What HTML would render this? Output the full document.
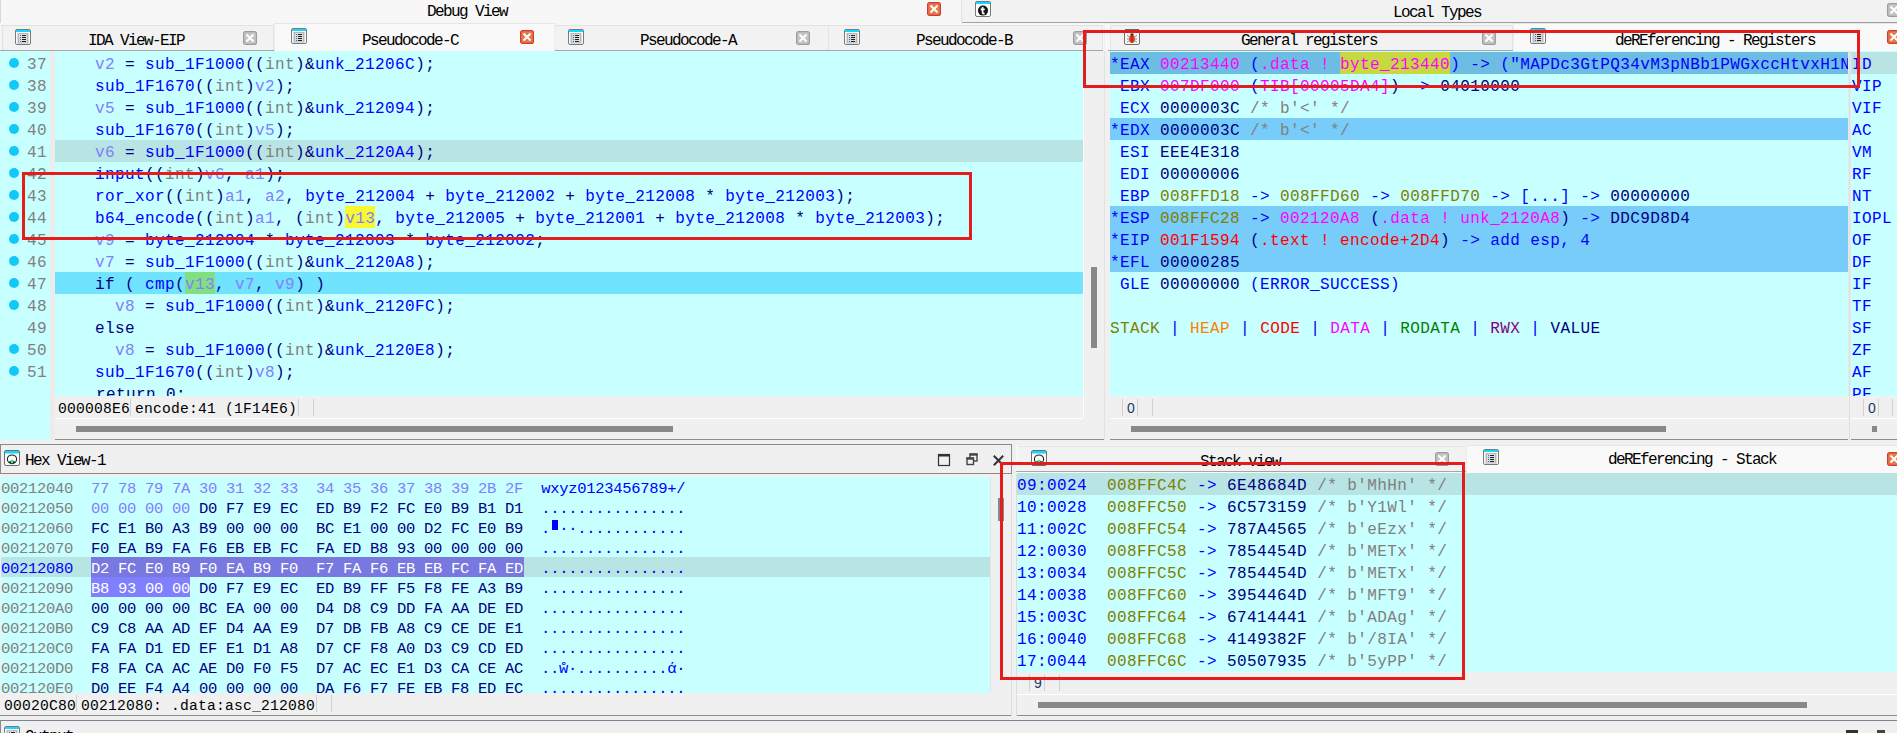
<!DOCTYPE html><html><head><meta charset="utf-8"><style>
*{margin:0;padding:0}
html,body{width:1897px;height:733px;overflow:hidden;background:#f0f0f0}
body>div,body>svg,div>div,div>svg{position:absolute}
.t{white-space:pre;line-height:22px;height:22px}
.cd{font-family:"Liberation Mono",monospace;font-size:16px;letter-spacing:0.4px;padding-top:2px}
.hx{font-family:"Liberation Mono",monospace;font-size:15.5px;letter-spacing:-0.3px;line-height:20px;height:20px;padding-top:2px}
.tabf{font-family:"Liberation Mono",monospace;font-size:16px;letter-spacing:-1.6px;color:#000;line-height:20px;height:20px}
.stf{font-family:"Liberation Mono",monospace;font-size:14.67px;letter-spacing:0.2px;color:#000;line-height:18px;height:18px}
.stn{font-family:"Liberation Sans",sans-serif;font-size:14px;color:#1a3a6a;line-height:18px;height:18px}
span{position:static}
.n{color:#000080}.b{color:#0000ff}.v{color:#8080ff}.k{color:#808080}.gray{color:#808080}
.m{color:#ff00ff}.o{color:#808000}.r{color:#ff0000}.g{color:#808080}.or{color:#ff8000}.gr{color:#008000}.pu{color:#800080}
.w{color:#ffffff}
.blk{display:inline-block;width:6px;height:10px;background:#0000ff;color:transparent;vertical-align:-1px;margin:0 1.5px 0 1.5px;letter-spacing:0}

</style></head><body><div style="left:0;top:0;width:1897px;height:733px;background:#f0f0f0"></div>
<div style="left:0px;top:0px;width:962px;height:24px;background:#f7f7f7"></div>
<div style="left:0px;top:0px;width:1px;height:440px;background:#d8d8d8"></div>
<div style="left:962px;top:0px;width:935px;height:22px;background:#f2f2f2"></div>
<div style="left:961px;top:0px;width:1px;height:22px;background:#e0e0e0"></div>
<div style="left:962px;top:22px;width:935px;height:1px;background:#a0a0a0"></div>
<div class="t tabf" style="left:427px;top:2px;">Debug View</div>
<svg style="left:927px;top:2px" width="14" height="14" viewBox="0 0 14 14"><rect x="0.6" y="0.6" width="12.8" height="12.8" rx="2" fill="#e27a4e" stroke="#d83a2a" stroke-width="1.2"/><path d="M4.2 4.2 L9.8 9.8 M9.8 4.2 L4.2 9.8" stroke="#fff" stroke-width="2" stroke-linecap="square"/></svg>
<svg style="left:975px;top:1px" width="16" height="16" viewBox="0 0 16 16"><rect x="0.5" y="0.5" width="15" height="15" rx="1.5" fill="#fdfdfd" stroke="#7a7a7a"/><rect x="1" y="1" width="14" height="2" fill="#10d8ff"/><circle cx="8" cy="9.6" r="5" fill="#111"/><path d="M7.6 6 L7.6 11.6 Q7.7 12.9 9.6 12.4 M5.6 8.4 L9.8 8.4" stroke="#fff" stroke-width="1.7" fill="none"/></svg>
<div class="t tabf" style="left:1393px;top:3px;">Local Types</div>
<svg style="left:1887px;top:3px" width="14" height="14" viewBox="0 0 14 14"><rect x="0.6" y="0.6" width="12.8" height="12.8" rx="2" fill="#c4c4c4" stroke="#9c9c9c" stroke-width="1.2"/><path d="M4.2 4.2 L9.8 9.8 M9.8 4.2 L4.2 9.8" stroke="#fff" stroke-width="2" stroke-linecap="square"/></svg>
<div style="left:0px;top:23px;width:1104px;height:28px;background:#f7f7f7"></div>
<div style="left:1px;top:25px;width:273px;height:25px;background:#f2f2f2;border-top:1px solid #e2e2e2;box-sizing:border-box"></div>
<div style="left:273px;top:25px;width:1px;height:25px;background:#e4e4e4"></div>
<div style="left:555px;top:25px;width:274px;height:25px;background:#f2f2f2;border-top:1px solid #e2e2e2;box-sizing:border-box"></div>
<div style="left:828px;top:25px;width:1px;height:25px;background:#e4e4e4"></div>
<div style="left:829px;top:25px;width:274px;height:25px;background:#f2f2f2;border-top:1px solid #e2e2e2;box-sizing:border-box"></div>
<div style="left:1102px;top:25px;width:1px;height:25px;background:#e4e4e4"></div>
<div style="left:0px;top:50px;width:274px;height:1px;background:#a6a6a6"></div>
<div style="left:2px;top:25px;width:1px;height:25px;background:#e0e0e0"></div>
<div style="left:555px;top:50px;width:548px;height:1px;background:#a6a6a6"></div>
<div style="left:274px;top:23px;width:281px;height:28px;background:#f9f9f9;border-top:1px solid #e6e6e6;border-left:1px solid #ececec;border-right:1px solid #ececec;box-sizing:border-box"></div>
<svg style="left:15px;top:29px" width="16" height="16" viewBox="0 0 16 16"><rect x="0.5" y="0.5" width="15" height="15" rx="1.5" fill="#fdfdfd" stroke="#7a7a7a"/><rect x="1" y="1" width="14" height="2" fill="#10d8ff"/><rect x="2.5" y="4" width="11" height="10.5" fill="#b8b8b8"/><rect x="4" y="5" width="8" height="8.5" fill="#dcdcdc"/><rect x="5" y="6" width="1" height="1" fill="#1a7ad8"/><rect x="7" y="6" width="4" height="1" fill="#222"/><rect x="5" y="8" width="1" height="1" fill="#1a7ad8"/><rect x="7" y="8" width="4" height="1" fill="#222"/><rect x="5" y="10" width="1" height="1" fill="#1a7ad8"/><rect x="7" y="10" width="4" height="1" fill="#222"/><rect x="5" y="12" width="1" height="1" fill="#1a7ad8"/><rect x="7" y="12" width="4" height="1" fill="#222"/></svg>
<div class="t tabf" style="left:88px;top:31px;">IDA View-EIP</div>
<svg style="left:243px;top:31px" width="14" height="14" viewBox="0 0 14 14"><rect x="0.6" y="0.6" width="12.8" height="12.8" rx="2" fill="#c4c4c4" stroke="#9c9c9c" stroke-width="1.2"/><path d="M4.2 4.2 L9.8 9.8 M9.8 4.2 L4.2 9.8" stroke="#fff" stroke-width="2" stroke-linecap="square"/></svg>
<svg style="left:291px;top:28px" width="16" height="16" viewBox="0 0 16 16"><rect x="0.5" y="0.5" width="15" height="15" rx="1.5" fill="#fdfdfd" stroke="#7a7a7a"/><rect x="1" y="1" width="14" height="2" fill="#10d8ff"/><rect x="2.5" y="4" width="11" height="10.5" fill="#b8b8b8"/><rect x="4" y="5" width="8" height="8.5" fill="#dcdcdc"/><rect x="5" y="6" width="1" height="1" fill="#1a7ad8"/><rect x="7" y="6" width="4" height="1" fill="#222"/><rect x="5" y="8" width="1" height="1" fill="#1a7ad8"/><rect x="7" y="8" width="4" height="1" fill="#222"/><rect x="5" y="10" width="1" height="1" fill="#1a7ad8"/><rect x="7" y="10" width="4" height="1" fill="#222"/><rect x="5" y="12" width="1" height="1" fill="#1a7ad8"/><rect x="7" y="12" width="4" height="1" fill="#222"/></svg>
<div class="t tabf" style="left:362px;top:31px;">Pseudocode-C</div>
<svg style="left:520px;top:30px" width="14" height="14" viewBox="0 0 14 14"><rect x="0.6" y="0.6" width="12.8" height="12.8" rx="2" fill="#e27a4e" stroke="#d83a2a" stroke-width="1.2"/><path d="M4.2 4.2 L9.8 9.8 M9.8 4.2 L4.2 9.8" stroke="#fff" stroke-width="2" stroke-linecap="square"/></svg>
<svg style="left:568px;top:29px" width="16" height="16" viewBox="0 0 16 16"><rect x="0.5" y="0.5" width="15" height="15" rx="1.5" fill="#fdfdfd" stroke="#7a7a7a"/><rect x="1" y="1" width="14" height="2" fill="#10d8ff"/><rect x="2.5" y="4" width="11" height="10.5" fill="#b8b8b8"/><rect x="4" y="5" width="8" height="8.5" fill="#dcdcdc"/><rect x="5" y="6" width="1" height="1" fill="#1a7ad8"/><rect x="7" y="6" width="4" height="1" fill="#222"/><rect x="5" y="8" width="1" height="1" fill="#1a7ad8"/><rect x="7" y="8" width="4" height="1" fill="#222"/><rect x="5" y="10" width="1" height="1" fill="#1a7ad8"/><rect x="7" y="10" width="4" height="1" fill="#222"/><rect x="5" y="12" width="1" height="1" fill="#1a7ad8"/><rect x="7" y="12" width="4" height="1" fill="#222"/></svg>
<div class="t tabf" style="left:640px;top:31px;">Pseudocode-A</div>
<svg style="left:796px;top:31px" width="14" height="14" viewBox="0 0 14 14"><rect x="0.6" y="0.6" width="12.8" height="12.8" rx="2" fill="#c4c4c4" stroke="#9c9c9c" stroke-width="1.2"/><path d="M4.2 4.2 L9.8 9.8 M9.8 4.2 L4.2 9.8" stroke="#fff" stroke-width="2" stroke-linecap="square"/></svg>
<svg style="left:844px;top:29px" width="16" height="16" viewBox="0 0 16 16"><rect x="0.5" y="0.5" width="15" height="15" rx="1.5" fill="#fdfdfd" stroke="#7a7a7a"/><rect x="1" y="1" width="14" height="2" fill="#10d8ff"/><rect x="2.5" y="4" width="11" height="10.5" fill="#b8b8b8"/><rect x="4" y="5" width="8" height="8.5" fill="#dcdcdc"/><rect x="5" y="6" width="1" height="1" fill="#1a7ad8"/><rect x="7" y="6" width="4" height="1" fill="#222"/><rect x="5" y="8" width="1" height="1" fill="#1a7ad8"/><rect x="7" y="8" width="4" height="1" fill="#222"/><rect x="5" y="10" width="1" height="1" fill="#1a7ad8"/><rect x="7" y="10" width="4" height="1" fill="#222"/><rect x="5" y="12" width="1" height="1" fill="#1a7ad8"/><rect x="7" y="12" width="4" height="1" fill="#222"/></svg>
<div class="t tabf" style="left:916px;top:31px;">Pseudocode-B</div>
<svg style="left:1073px;top:31px" width="14" height="14" viewBox="0 0 14 14"><rect x="0.6" y="0.6" width="12.8" height="12.8" rx="2" fill="#c4c4c4" stroke="#9c9c9c" stroke-width="1.2"/><path d="M4.2 4.2 L9.8 9.8 M9.8 4.2 L4.2 9.8" stroke="#fff" stroke-width="2" stroke-linecap="square"/></svg>
<div style="left:0px;top:51px;width:50px;height:389px;background:#c8ffff"></div>
<div style="left:50px;top:51px;width:5px;height:389px;background:#ececec"></div>
<div style="left:55px;top:51px;width:1028px;height:345px;background:#c8ffff"></div>
<div style="left:1083px;top:51px;width:1px;height:367px;background:#ffffff"></div>
<div style="left:55px;top:140px;width:1028px;height:22px;background:#b8e4e4"></div>
<div style="left:55px;top:272px;width:1028px;height:22px;background:#70e4ff"></div>
<div style="left:345px;top:206px;width:30px;height:22px;background:#f8f830"></div>
<div style="left:185px;top:272px;width:30px;height:22px;background:#80e080"></div>
<div style="left:9px;top:58px;width:10px;height:10px;border-radius:50%;background:#12c8f8"></div>
<div class="t cd gray" style="left:27px;top:52px;">37</div>
<div class="t cd n" style="left:55px;top:52px;">    <span class="v">v2</span> = <span class="b">sub_1F1000</span>((<span class="k">int</span>)&amp;<span class="b">unk_21206C</span>);</div>
<div style="left:9px;top:80px;width:10px;height:10px;border-radius:50%;background:#12c8f8"></div>
<div class="t cd gray" style="left:27px;top:74px;">38</div>
<div class="t cd n" style="left:55px;top:74px;">    <span class="b">sub_1F1670</span>((<span class="k">int</span>)<span class="v">v2</span>);</div>
<div style="left:9px;top:102px;width:10px;height:10px;border-radius:50%;background:#12c8f8"></div>
<div class="t cd gray" style="left:27px;top:96px;">39</div>
<div class="t cd n" style="left:55px;top:96px;">    <span class="v">v5</span> = <span class="b">sub_1F1000</span>((<span class="k">int</span>)&amp;<span class="b">unk_212094</span>);</div>
<div style="left:9px;top:124px;width:10px;height:10px;border-radius:50%;background:#12c8f8"></div>
<div class="t cd gray" style="left:27px;top:118px;">40</div>
<div class="t cd n" style="left:55px;top:118px;">    <span class="b">sub_1F1670</span>((<span class="k">int</span>)<span class="v">v5</span>);</div>
<div style="left:9px;top:146px;width:10px;height:10px;border-radius:50%;background:#12c8f8"></div>
<div class="t cd gray" style="left:27px;top:140px;">41</div>
<div class="t cd n" style="left:55px;top:140px;">    <span class="v">v6</span> = <span class="b">sub_1F1000</span>((<span class="k">int</span>)&amp;<span class="b">unk_2120A4</span>);</div>
<div style="left:9px;top:168px;width:10px;height:10px;border-radius:50%;background:#12c8f8"></div>
<div class="t cd gray" style="left:27px;top:162px;">42</div>
<div class="t cd n" style="left:55px;top:162px;">    <span class="b">input</span>((<span class="k">int</span>)<span class="v">v6</span>, <span class="v">a1</span>);</div>
<div style="left:9px;top:190px;width:10px;height:10px;border-radius:50%;background:#12c8f8"></div>
<div class="t cd gray" style="left:27px;top:184px;">43</div>
<div class="t cd n" style="left:55px;top:184px;">    <span class="b">ror_xor</span>((<span class="k">int</span>)<span class="v">a1</span>, <span class="v">a2</span>, <span class="b">byte_212004</span> + <span class="b">byte_212002</span> + <span class="b">byte_212008</span> * <span class="b">byte_212003</span>);</div>
<div style="left:9px;top:212px;width:10px;height:10px;border-radius:50%;background:#12c8f8"></div>
<div class="t cd gray" style="left:27px;top:206px;">44</div>
<div class="t cd n" style="left:55px;top:206px;">    <span class="b">b64_encode</span>((<span class="k">int</span>)<span class="v">a1</span>, (<span class="k">int</span>)<span class="v hy">v13</span>, <span class="b">byte_212005</span> + <span class="b">byte_212001</span> + <span class="b">byte_212008</span> * <span class="b">byte_212003</span>);</div>
<div style="left:9px;top:234px;width:10px;height:10px;border-radius:50%;background:#12c8f8"></div>
<div class="t cd gray" style="left:27px;top:228px;">45</div>
<div class="t cd n" style="left:55px;top:228px;">    <span class="v">v9</span> = <span class="b">byte_212004</span> * <span class="b">byte_212003</span> * <span class="b">byte_212002</span>;</div>
<div style="left:9px;top:256px;width:10px;height:10px;border-radius:50%;background:#12c8f8"></div>
<div class="t cd gray" style="left:27px;top:250px;">46</div>
<div class="t cd n" style="left:55px;top:250px;">    <span class="v">v7</span> = <span class="b">sub_1F1000</span>((<span class="k">int</span>)&amp;<span class="b">unk_2120A8</span>);</div>
<div style="left:9px;top:278px;width:10px;height:10px;border-radius:50%;background:#12c8f8"></div>
<div class="t cd gray" style="left:27px;top:272px;">47</div>
<div class="t cd n" style="left:55px;top:272px;">    if ( <span class="b">cmp</span>(<span class="v hg">v13</span>, <span class="v">v7</span>, <span class="v">v9</span>) )</div>
<div style="left:9px;top:300px;width:10px;height:10px;border-radius:50%;background:#12c8f8"></div>
<div class="t cd gray" style="left:27px;top:294px;">48</div>
<div class="t cd n" style="left:55px;top:294px;">      <span class="v">v8</span> = <span class="b">sub_1F1000</span>((<span class="k">int</span>)&amp;<span class="b">unk_2120FC</span>);</div>
<div class="t cd gray" style="left:27px;top:316px;">49</div>
<div class="t cd n" style="left:55px;top:316px;">    else</div>
<div style="left:9px;top:344px;width:10px;height:10px;border-radius:50%;background:#12c8f8"></div>
<div class="t cd gray" style="left:27px;top:338px;">50</div>
<div class="t cd n" style="left:55px;top:338px;">      <span class="v">v8</span> = <span class="b">sub_1F1000</span>((<span class="k">int</span>)&amp;<span class="b">unk_2120E8</span>);</div>
<div style="left:9px;top:366px;width:10px;height:10px;border-radius:50%;background:#12c8f8"></div>
<div class="t cd gray" style="left:27px;top:360px;">51</div>
<div class="t cd n" style="left:55px;top:360px;">    <span class="b">sub_1F1670</span>((<span class="k">int</span>)<span class="v">v8</span>);</div>
<div style="left:55px;top:382px;width:1028px;height:14px;overflow:hidden"><div class="t cd n" style="left:1px;top:0px">    return 0;</div></div>
<div style="left:1091px;top:267px;width:6px;height:81px;background:#888888"></div>
<div style="left:1104px;top:51px;width:1px;height:389px;background:#e2e2e2"></div>
<div style="left:55px;top:418px;width:1028px;height:1px;background:#ffffff"></div>
<div class="t stf" style="left:58px;top:400px;">000008E6</div>
<div style="left:130px;top:399px;width:1px;height:17px;background:#d0d0d0"></div>
<div class="t stf" style="left:135px;top:400px;">encode:41 (1F14E6)</div>
<div style="left:298px;top:399px;width:1px;height:17px;background:#d0d0d0"></div>
<div style="left:313px;top:399px;width:1px;height:17px;background:#d0d0d0"></div>
<div style="left:76px;top:426px;width:597px;height:6px;background:#888888"></div>
<div style="left:55px;top:439px;width:1049px;height:1px;background:#8c8c8c"></div>
<div style="left:1105px;top:24px;width:792px;height:27px;background:#f7f7f7"></div>
<div style="left:1111px;top:25px;width:402px;height:25px;background:#f2f2f2;border-top:1px solid #e2e2e2;box-sizing:border-box"></div>
<div style="left:1110px;top:25px;width:1px;height:25px;background:#e4e4e4"></div>
<div style="left:1512px;top:25px;width:1px;height:25px;background:#e4e4e4"></div>
<div style="left:1108px;top:50px;width:405px;height:1px;background:#a6a6a6"></div>
<div style="left:1513px;top:23px;width:384px;height:28px;background:#f9f9f9;border-top:1px solid #e6e6e6;border-left:1px solid #ececec;box-sizing:border-box"></div>
<svg style="left:1124px;top:29px" width="16" height="16" viewBox="0 0 16 16"><rect x="0.5" y="0.5" width="15" height="15" rx="1.5" fill="#f6f6f6" stroke="#707070"/><rect x="1" y="0.5" width="14" height="2" fill="#556068"/><path d="M3 6.5 L6 8 M3 10 L6 10 M3 13 L6 11.5 M13 6.5 L10 8 M13 10 L10 10 M13 13 L10 11.5" stroke="#8a9aa0" stroke-width="1"/><ellipse cx="8" cy="10" rx="2.8" ry="4" fill="#e83a10"/><rect x="7.5" y="6.5" width="1" height="7" fill="#9a2a10"/><rect x="6.5" y="4.5" width="3" height="2" fill="#402018"/></svg>
<div class="t tabf" style="left:1241px;top:31px;">General registers</div>
<svg style="left:1482px;top:31px" width="14" height="14" viewBox="0 0 14 14"><rect x="0.6" y="0.6" width="12.8" height="12.8" rx="2" fill="#c4c4c4" stroke="#9c9c9c" stroke-width="1.2"/><path d="M4.2 4.2 L9.8 9.8 M9.8 4.2 L4.2 9.8" stroke="#fff" stroke-width="2" stroke-linecap="square"/></svg>
<svg style="left:1530px;top:28px" width="16" height="16" viewBox="0 0 16 16"><rect x="0.5" y="0.5" width="15" height="15" rx="1.5" fill="#fdfdfd" stroke="#7a7a7a"/><rect x="1" y="1" width="14" height="2" fill="#10d8ff"/><rect x="2.5" y="4" width="11" height="10.5" fill="#b8b8b8"/><rect x="4" y="5" width="8" height="8.5" fill="#dcdcdc"/><rect x="5" y="6" width="1" height="1" fill="#1a7ad8"/><rect x="7" y="6" width="4" height="1" fill="#222"/><rect x="5" y="8" width="1" height="1" fill="#1a7ad8"/><rect x="7" y="8" width="4" height="1" fill="#222"/><rect x="5" y="10" width="1" height="1" fill="#1a7ad8"/><rect x="7" y="10" width="4" height="1" fill="#222"/><rect x="5" y="12" width="1" height="1" fill="#1a7ad8"/><rect x="7" y="12" width="4" height="1" fill="#222"/></svg>
<div class="t tabf" style="left:1615px;top:31px;">deREferencing - Registers</div>
<svg style="left:1887px;top:30px" width="14" height="14" viewBox="0 0 14 14"><rect x="0.6" y="0.6" width="12.8" height="12.8" rx="2" fill="#e27a4e" stroke="#d83a2a" stroke-width="1.2"/><path d="M4.2 4.2 L9.8 9.8 M9.8 4.2 L4.2 9.8" stroke="#fff" stroke-width="2" stroke-linecap="square"/></svg>
<div style="left:1110px;top:51px;width:738px;height:345px;background:#c8ffff"></div>
<div style="left:1848px;top:51px;width:3px;height:345px;background:#e8e8e8"></div>
<div style="left:1851px;top:51px;width:46px;height:345px;background:#c8ffff"></div>
<div style="left:1110px;top:52px;width:738px;height:22px;background:#6cbce4"></div>
<div style="left:1851px;top:52px;width:46px;height:22px;background:#b8e4e4"></div>
<div style="left:1340px;top:52px;width:110px;height:22px;background:#c8d840"></div>
<div style="left:1110px;top:118px;width:738px;height:22px;background:#78ccfa"></div>
<div style="left:1110px;top:206px;width:738px;height:22px;background:#78ccfa"></div>
<div style="left:1110px;top:228px;width:738px;height:22px;background:#78ccfa"></div>
<div style="left:1110px;top:250px;width:738px;height:22px;background:#78ccfa"></div>
<div style="left:1110px;top:52px;width:738px;height:344px;overflow:hidden">
<div class="t cd" style="left:0px;top:0px;"><span class="b">*EAX</span> <span class="m">00213440</span> <span class="b">(</span><span class="m">.data ! </span><span class="m hb">byte_213440</span><span class="b">) -&gt; ("MAPDc3GtPQ34vM3pNBb1PWGxccHtvxH1N</span></div>
<div class="t cd" style="left:0px;top:22px;"><span class="b"> EBX</span> <span class="m">007DF000</span> <span class="b">(</span><span class="m">TIB[00005DA4]</span><span class="n">)</span> <span class="b">-&gt; </span><span class="n">04010000</span></div>
<div class="t cd" style="left:0px;top:44px;"><span class="b"> ECX</span> <span class="n">0000003C</span> <span class="g">/* b'&lt;' */</span></div>
<div class="t cd" style="left:0px;top:66px;"><span class="b">*EDX</span> <span class="n">0000003C</span> <span class="g">/* b'&lt;' */</span></div>
<div class="t cd" style="left:0px;top:88px;"><span class="b"> ESI</span> <span class="n">EEE4E318</span></div>
<div class="t cd" style="left:0px;top:110px;"><span class="b"> EDI</span> <span class="n">00000006</span></div>
<div class="t cd" style="left:0px;top:132px;"><span class="b"> EBP</span> <span class="o">008FFD18</span> <span class="b">-&gt;</span> <span class="o">008FFD60</span> <span class="b">-&gt;</span> <span class="o">008FFD70</span> <span class="b">-&gt; [...] -&gt;</span> <span class="n">00000000</span></div>
<div class="t cd" style="left:0px;top:154px;"><span class="b">*ESP</span> <span class="o">008FFC28</span> <span class="b">-&gt;</span> <span class="m">002120A8</span> <span class="n">(</span><span class="m">.data ! unk_2120A8</span><span class="n">)</span> <span class="b">-&gt;</span> <span class="n">DDC9D8D4</span></div>
<div class="t cd" style="left:0px;top:176px;"><span class="b">*EIP</span> <span class="r">001F1594</span> <span class="n">(</span><span class="r">.text ! encode+2D4</span><span class="n">)</span> <span class="b">-&gt; add esp, 4</span></div>
<div class="t cd" style="left:0px;top:198px;"><span class="b">*EFL</span> <span class="n">00000285</span></div>
<div class="t cd" style="left:0px;top:220px;"><span class="b"> GLE</span> <span class="n">00000000</span> <span class="b">(ERROR_SUCCESS)</span></div>
<div class="t cd" style="left:0px;top:264px;"><span class="o">STACK</span> <span class="b">|</span> <span class="or">HEAP</span> <span class="b">|</span> <span class="r">CODE</span> <span class="b">|</span> <span class="m">DATA</span> <span class="b">|</span> <span class="gr">RODATA</span> <span class="b">|</span> <span class="pu">RWX</span> <span class="b">|</span> <span class="n">VALUE</span></div>
</div>
<div style="left:1851px;top:52px;width:46px;height:344px;overflow:hidden">
<div class="t cd b" style="left:1px;top:0px;">ID</div>
<div class="t cd b" style="left:1px;top:22px;">VIP</div>
<div class="t cd b" style="left:1px;top:44px;">VIF</div>
<div class="t cd b" style="left:1px;top:66px;">AC</div>
<div class="t cd b" style="left:1px;top:88px;">VM</div>
<div class="t cd b" style="left:1px;top:110px;">RF</div>
<div class="t cd b" style="left:1px;top:132px;">NT</div>
<div class="t cd b" style="left:1px;top:154px;">IOPL</div>
<div class="t cd b" style="left:1px;top:176px;">OF</div>
<div class="t cd b" style="left:1px;top:198px;">DF</div>
<div class="t cd b" style="left:1px;top:220px;">IF</div>
<div class="t cd b" style="left:1px;top:242px;">TF</div>
<div class="t cd b" style="left:1px;top:264px;">SF</div>
<div class="t cd b" style="left:1px;top:286px;">ZF</div>
<div class="t cd b" style="left:1px;top:308px;">AF</div>
<div class="t cd b" style="left:1px;top:330px;">PF</div>
</div>
<div style="left:1110px;top:418px;width:738px;height:1px;background:#ffffff"></div>
<div style="left:1851px;top:418px;width:46px;height:1px;background:#ffffff"></div>
<div style="left:1122px;top:399px;width:1px;height:17px;background:#d0d0d0"></div>
<div style="left:1137px;top:399px;width:1px;height:17px;background:#d0d0d0"></div>
<div style="left:1152px;top:399px;width:1px;height:17px;background:#d0d0d0"></div>
<div style="left:1863px;top:399px;width:1px;height:17px;background:#d0d0d0"></div>
<div style="left:1878px;top:399px;width:1px;height:17px;background:#d0d0d0"></div>
<div style="left:1892px;top:399px;width:1px;height:17px;background:#d0d0d0"></div>
<div class="t stn" style="left:1127px;top:399px;">0</div>
<div class="t stn" style="left:1868px;top:399px;">0</div>
<div style="left:1131px;top:426px;width:535px;height:6px;background:#888888"></div>
<div style="left:1872px;top:426px;width:5px;height:6px;background:#888888"></div>
<div style="left:1110px;top:439px;width:738px;height:1px;background:#8c8c8c"></div>
<div style="left:1851px;top:439px;width:46px;height:1px;background:#8c8c8c"></div>
<div style="left:1849px;top:51px;width:1px;height:389px;background:#e0e0e0"></div>
<div style="left:0px;top:444px;width:1012px;height:30px;background:#f0f0f0;border:1px solid #8a8a8a;box-sizing:border-box"></div>
<svg style="left:4px;top:450px" width="16" height="16" viewBox="0 0 16 16"><rect x="0.5" y="0.5" width="15" height="15" rx="1.5" fill="#fafafa" stroke="#6e6e6e"/><rect x="1" y="1" width="14" height="2.5" fill="#10d8ff"/><ellipse cx="8" cy="9.3" rx="4.6" ry="4.3" fill="none" stroke="#1a1a1a" stroke-width="1.1"/><path d="M4.5 12 Q8 9 11.5 12 Q8 14.5 4.5 12 Z" fill="#1a1a1a"/><ellipse cx="8" cy="11.6" rx="1.4" ry="2" fill="#3ee87a"/></svg>
<div class="t tabf" style="left:25px;top:451px;">Hex View-1</div>
<svg style="left:937px;top:453px" width="14" height="14" viewBox="0 0 14 14"><rect x="1.5" y="1.5" width="11" height="11" fill="none" stroke="#333" stroke-width="1.2"/><rect x="1" y="1" width="12" height="2.5" fill="#333"/></svg>
<svg style="left:966px;top:453px" width="12" height="13" viewBox="0 0 12 13"><rect x="4" y="1" width="7" height="7" fill="#f0f0f0" stroke="#444" stroke-width="1.4"/><rect x="3.5" y="0.5" width="8" height="2.2" fill="#444"/><rect x="1" y="5" width="6.5" height="6.5" fill="#f0f0f0" stroke="#444" stroke-width="1.4"/><rect x="0.5" y="4.5" width="7.5" height="2.2" fill="#444"/></svg>
<svg style="left:992px;top:454px" width="13" height="13" viewBox="0 0 13 13"><path d="M1.8 1.8 L11.2 11.2 M11.2 1.8 L1.8 11.2" stroke="#333" stroke-width="2"/></svg>
<div style="left:1px;top:477px;width:989px;height:216px;background:#c8ffff"></div>
<div style="left:1px;top:557px;width:989px;height:20px;background:#b8e4e4"></div>
<div style="left:91px;top:557px;width:433px;height:20px;background:#7878e0"></div>
<div style="left:91px;top:577px;width:99px;height:20px;background:#8080ff"></div>
<div style="left:1px;top:477px;width:989px;height:216px;overflow:hidden">
<div class="t hx n" style="left:0px;top:0px;"><span class="gray">00212040</span>  <span class="v">77 78 79 7A 30 31 32 33  34 35 36 37 38 39 2B 2F</span>  <span class="b">wxyz0123456789+/</span></div>
<div class="t hx n" style="left:0px;top:20px;"><span class="gray">00212050</span>  <span class="v">00 00 00 00</span> D0 F7 E9 EC  ED B9 F2 FC E0 B9 B1 D1  <span class="b">................</span></div>
<div class="t hx n" style="left:0px;top:40px;"><span class="gray">00212060</span>  FC E1 B0 A3 B9 00 00 00  BC E1 00 00 D2 FC E0 B9  <span class="b">.</span><span class="blk">█</span><span class="b">··............</span></div>
<div class="t hx n" style="left:0px;top:60px;"><span class="gray">00212070</span>  F0 EA B9 FA F6 EB EB FC  FA ED B8 93 00 00 00 00  <span class="b">................</span></div>
<div class="t hx n" style="left:0px;top:80px;"><span class="b">00212080</span>  <span class="w">D2 FC E0 B9 F0 EA B9 F0  F7 FA F6 EB EB FC FA ED</span>  <span class="b">................</span></div>
<div class="t hx n" style="left:0px;top:100px;"><span class="gray">00212090</span>  <span class="w">B8 93 00 00</span> D0 F7 E9 EC  ED B9 FF F5 F8 FE A3 B9  <span class="b">................</span></div>
<div class="t hx n" style="left:0px;top:120px;"><span class="gray">002120A0</span>  00 00 00 00 BC EA 00 00  D4 D8 C9 DD FA AA DE ED  <span class="b">................</span></div>
<div class="t hx n" style="left:0px;top:140px;"><span class="gray">002120B0</span>  C9 C8 AA AD EF D4 AA E9  D7 DB FB A8 C9 CE DE E1  <span class="b">................</span></div>
<div class="t hx n" style="left:0px;top:160px;"><span class="gray">002120C0</span>  FA FA D1 ED EF E1 D1 A8  D7 CF F8 A0 D3 C9 CD ED  <span class="b">................</span></div>
<div class="t hx n" style="left:0px;top:180px;"><span class="gray">002120D0</span>  F8 FA CA AC AE D0 F0 F5  D7 AC EC E1 D3 CA CE AC  <span class="b">..ẘ·..........ά·</span></div>
<div class="t hx n" style="left:0px;top:200px;"><span class="gray">002120E0</span>  D0 EE F4 A4 00 00 00 00  DA F6 F7 FE EB F8 ED EC  <span class="b">................</span></div>
</div>
<div style="left:990px;top:477px;width:1px;height:216px;background:#e4e4e4"></div>
<div style="left:998px;top:498px;width:6px;height:23px;background:#888888"></div>
<div class="t stf" style="left:4px;top:697px;">00020C80</div>
<div style="left:76px;top:695px;width:1px;height:17px;background:#d0d0d0"></div>
<div class="t stf" style="left:81px;top:697px;">00212080: .data:asc_212080</div>
<div style="left:316px;top:695px;width:1px;height:17px;background:#d0d0d0"></div>
<div style="left:331px;top:695px;width:1px;height:17px;background:#d0d0d0"></div>
<div style="left:0px;top:715px;width:1012px;height:1px;background:#8c8c8c"></div>
<div style="left:1011px;top:474px;width:1px;height:242px;background:#dcdcdc"></div>
<div style="left:1016px;top:445px;width:881px;height:28px;background:#f7f7f7"></div>
<div style="left:1018px;top:446px;width:448px;height:26px;background:#f2f2f2;border-top:1px solid #e2e2e2;box-sizing:border-box"></div>
<div style="left:1016px;top:471px;width:450px;height:1px;background:#a6a6a6"></div>
<div style="left:1466px;top:445px;width:431px;height:28px;background:#f9f9f9;border-top:1px solid #e6e6e6;border-left:1px solid #ececec;box-sizing:border-box"></div>
<svg style="left:1031px;top:450px" width="16" height="16" viewBox="0 0 16 16"><rect x="0.5" y="0.5" width="15" height="15" rx="1.5" fill="#fafafa" stroke="#6e6e6e"/><rect x="1" y="1" width="14" height="2.5" fill="#10d8ff"/><ellipse cx="8" cy="9.3" rx="4.6" ry="4.3" fill="none" stroke="#1a1a1a" stroke-width="1.1"/><path d="M4.5 12 Q8 9 11.5 12 Q8 14.5 4.5 12 Z" fill="#1a1a1a"/><ellipse cx="8" cy="11.6" rx="1.4" ry="2" fill="#3ee87a"/></svg>
<div class="t tabf" style="left:1200px;top:452px;">Stack view</div>
<svg style="left:1435px;top:452px" width="14" height="14" viewBox="0 0 14 14"><rect x="0.6" y="0.6" width="12.8" height="12.8" rx="2" fill="#c4c4c4" stroke="#9c9c9c" stroke-width="1.2"/><path d="M4.2 4.2 L9.8 9.8 M9.8 4.2 L4.2 9.8" stroke="#fff" stroke-width="2" stroke-linecap="square"/></svg>
<svg style="left:1483px;top:449px" width="16" height="16" viewBox="0 0 16 16"><rect x="0.5" y="0.5" width="15" height="15" rx="1.5" fill="#fdfdfd" stroke="#7a7a7a"/><rect x="1" y="1" width="14" height="2" fill="#10d8ff"/><rect x="2.5" y="4" width="11" height="10.5" fill="#b8b8b8"/><rect x="4" y="5" width="8" height="8.5" fill="#dcdcdc"/><rect x="5" y="6" width="1" height="1" fill="#1a7ad8"/><rect x="7" y="6" width="4" height="1" fill="#222"/><rect x="5" y="8" width="1" height="1" fill="#1a7ad8"/><rect x="7" y="8" width="4" height="1" fill="#222"/><rect x="5" y="10" width="1" height="1" fill="#1a7ad8"/><rect x="7" y="10" width="4" height="1" fill="#222"/><rect x="5" y="12" width="1" height="1" fill="#1a7ad8"/><rect x="7" y="12" width="4" height="1" fill="#222"/></svg>
<div class="t tabf" style="left:1608px;top:450px;">deREferencing - Stack</div>
<svg style="left:1887px;top:452px" width="14" height="14" viewBox="0 0 14 14"><rect x="0.6" y="0.6" width="12.8" height="12.8" rx="2" fill="#e27a4e" stroke="#d83a2a" stroke-width="1.2"/><path d="M4.2 4.2 L9.8 9.8 M9.8 4.2 L4.2 9.8" stroke="#fff" stroke-width="2" stroke-linecap="square"/></svg>
<div style="left:1017px;top:473px;width:880px;height:199px;background:#c8ffff"></div>
<div style="left:1017px;top:473px;width:880px;height:22px;background:#b8e4e4"></div>
<div class="t cd" style="left:1017px;top:473px;"><span class="b">09:0024</span>  <span class="o">008FFC4C</span> <span class="b">-&gt;</span> <span class="n">6E48684D</span> <span class="g">/* b'MhHn' */</span></div>
<div class="t cd" style="left:1017px;top:495px;"><span class="b">10:0028</span>  <span class="o">008FFC50</span> <span class="b">-&gt;</span> <span class="n">6C573159</span> <span class="g">/* b'Y1Wl' */</span></div>
<div class="t cd" style="left:1017px;top:517px;"><span class="b">11:002C</span>  <span class="o">008FFC54</span> <span class="b">-&gt;</span> <span class="n">787A4565</span> <span class="g">/* b'eEzx' */</span></div>
<div class="t cd" style="left:1017px;top:539px;"><span class="b">12:0030</span>  <span class="o">008FFC58</span> <span class="b">-&gt;</span> <span class="n">7854454D</span> <span class="g">/* b'METx' */</span></div>
<div class="t cd" style="left:1017px;top:561px;"><span class="b">13:0034</span>  <span class="o">008FFC5C</span> <span class="b">-&gt;</span> <span class="n">7854454D</span> <span class="g">/* b'METx' */</span></div>
<div class="t cd" style="left:1017px;top:583px;"><span class="b">14:0038</span>  <span class="o">008FFC60</span> <span class="b">-&gt;</span> <span class="n">3954464D</span> <span class="g">/* b'MFT9' */</span></div>
<div class="t cd" style="left:1017px;top:605px;"><span class="b">15:003C</span>  <span class="o">008FFC64</span> <span class="b">-&gt;</span> <span class="n">67414441</span> <span class="g">/* b'ADAg' */</span></div>
<div class="t cd" style="left:1017px;top:627px;"><span class="b">16:0040</span>  <span class="o">008FFC68</span> <span class="b">-&gt;</span> <span class="n">4149382F</span> <span class="g">/* b'/8IA' */</span></div>
<div class="t cd" style="left:1017px;top:649px;"><span class="b">17:0044</span>  <span class="o">008FFC6C</span> <span class="b">-&gt;</span> <span class="n">50507935</span> <span class="g">/* b'5yPP' */</span></div>
<div style="left:1017px;top:694px;width:880px;height:1px;background:#ffffff"></div>
<div style="left:1029px;top:674px;width:1px;height:17px;background:#d0d0d0"></div>
<div style="left:1044px;top:674px;width:1px;height:17px;background:#d0d0d0"></div>
<div style="left:1059px;top:674px;width:1px;height:17px;background:#d0d0d0"></div>
<div class="t stn" style="left:1034px;top:674px;">9</div>
<div style="left:1038px;top:702px;width:769px;height:6px;background:#888888"></div>
<div style="left:1016px;top:715px;width:881px;height:1px;background:#8c8c8c"></div>
<div style="left:1016px;top:474px;width:1px;height:242px;background:#dcdcdc"></div>
<div style="left:0px;top:720px;width:1897px;height:1px;background:#7a8494"></div>
<div style="left:0px;top:721px;width:1897px;height:12px;background:#f0f0f0"></div>
<div style="left:0px;top:721px;width:1px;height:12px;background:#8a8a8a"></div>
<svg style="left:4px;top:726px" width="16" height="16" viewBox="0 0 16 16"><rect x="0.5" y="0.5" width="15" height="15" rx="1.5" fill="#fdfdfd" stroke="#7a7a7a"/><rect x="1" y="1" width="14" height="2" fill="#10d8ff"/><rect x="2.5" y="4" width="11" height="10.5" fill="#b8b8b8"/><rect x="4" y="5" width="8" height="8.5" fill="#dcdcdc"/><rect x="5" y="6" width="1" height="1" fill="#1a7ad8"/><rect x="7" y="6" width="4" height="1" fill="#222"/><rect x="5" y="8" width="1" height="1" fill="#1a7ad8"/><rect x="7" y="8" width="4" height="1" fill="#222"/><rect x="5" y="10" width="1" height="1" fill="#1a7ad8"/><rect x="7" y="10" width="4" height="1" fill="#222"/><rect x="5" y="12" width="1" height="1" fill="#1a7ad8"/><rect x="7" y="12" width="4" height="1" fill="#222"/></svg>
<div class="t tabf" style="left:25px;top:727px;">Output</div>
<div style="left:1846px;top:730px;width:12px;height:3px;background:#333"></div>
<div style="left:1877px;top:730px;width:8px;height:3px;background:#444"></div>
<div style="left:22px;top:172px;width:950px;height:68px;border:3px solid #e41c1c;box-sizing:border-box"></div>
<div style="left:1083px;top:30px;width:777px;height:58px;border:3px solid #e41c1c;box-sizing:border-box"></div>
<div style="left:1000px;top:462px;width:465px;height:218px;border:3px solid #e41c1c;box-sizing:border-box"></div></body></html>
